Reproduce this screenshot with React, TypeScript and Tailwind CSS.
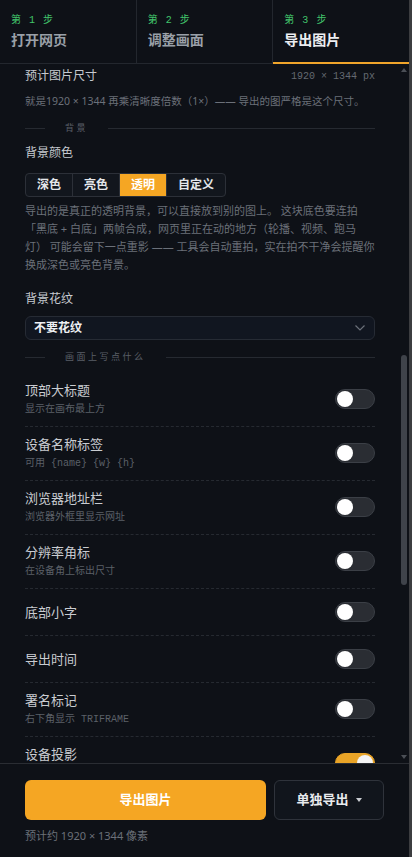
import React from "react";

const sans = "font-['Noto_Sans','Noto_Sans_CJK_SC',sans-serif]";
const mono = "font-['Liberation_Mono','Noto_Sans_CJK_SC',monospace]";

type Row = { title: string; sub?: string; on?: boolean; tall?: boolean };

const rows: Row[] = [
  { title: "顶部大标题", sub: "显示在画布最上方" },
  { title: "设备名称标签", sub: "可用 {name} {w} {h}" },
  { title: "浏览器地址栏", sub: "浏览器外框里显示网址" },
  { title: "分辨率角标", sub: "在设备角上标出尺寸" },
  { title: "底部小字" },
  { title: "导出时间" },
  { title: "署名标记", sub: "右下角显示 TRIFRAME" },
  { title: "设备投影", on: true, tall: true },
];

const steps = [
  { n: 1, label: "打开网页" },
  { n: 2, label: "调整画面" },
  { n: 3, label: "导出图片", active: true },
];

function Toggle({ on }: { on?: boolean }) {
  if (on) {
    return (
      <div className="w-10 h-5 shrink-0 rounded-full bg-[#e9a427] border border-[#e9a427] flex items-center justify-end px-[1px]">
        <div className="w-4 h-4 rounded-full bg-[#f4f4f4]" />
      </div>
    );
  }
  return (
    <div className="w-10 h-5 shrink-0 rounded-full bg-[#2a2d33] border border-[#3b3f46] flex items-center justify-start px-[1px]">
      <div className="w-4 h-4 rounded-full bg-white" />
    </div>
  );
}

function Divider({ label }: { label: string }) {
  return (
    <div className="flex items-center h-[14px] gap-5">
      <div className="w-5 h-px bg-[#262a31]" />
      <span className={`${sans} text-[9px] leading-[14px] tracking-[2.5px] text-[#5a5f67]`}>{label}</span>
      <div className="flex-1 h-px bg-[#262a31]" />
    </div>
  );
}

function Segmented() {
  const opts = ["深色", "亮色", "透明", "自定义"];
  return (
    <div className="flex w-fit h-6 rounded-[4px] border border-[#2c3038] bg-[#12161d] overflow-hidden">
      {opts.map((o, i) => (
        <div
          key={o}
          className={`${sans} px-[11px] flex items-center text-[12px] font-bold leading-none ${
            o === "透明" ? "bg-[#f5a623] text-white" : "text-[#e4e6ea]"
          } ${i > 0 ? "border-l border-[#2c3038]" : ""}`}
        >
          {o}
        </div>
      ))}
    </div>
  );
}

export default function App() {
  return (
    <div className={`${sans} w-[412px] h-[857px] flex bg-[#0e1117] overflow-hidden`}>
      <div className="w-[409px] h-full flex flex-col">
        {/* step tabs */}
        <div className="flex h-16 shrink-0">
          {steps.map((s, i) => (
            <div
              key={s.n}
              className={`flex-1 h-16 pl-[11px] pt-[14px] ${
                s.active ? "border-b-2 border-[#f0a52b]" : "border-b border-[#23272e]"
              } ${i < 2 ? "border-r border-r-[#23272e]" : ""}`}
            >
              <div className={`${mono} text-[10px] leading-[14px] tracking-[1px] text-[#41c46b]`}>
                第 {s.n} 步
              </div>
              <div
                className={`mt-[2px] text-[14px] leading-[20px] font-bold ${
                  s.active ? "text-[#eceef1]" : "text-[#9aa0a8]"
                }`}
              >
                {s.label}
              </div>
            </div>
          ))}
        </div>

        {/* settings body with scrollbar */}
        <div className="flex-1 min-h-0 flex">
          <div className="flex-1 min-w-0 overflow-hidden pl-[25px] pr-[26px] pt-[3px]">
            <div className="flex items-center justify-between h-[18px]">
              <span className="text-[12px] leading-[18px] text-[#c6cad0]">预计图片尺寸</span>
              <span className={`${mono} text-[10px] text-[#646971]`}>1920 × 1344 px</span>
            </div>
            <p className="mt-[8px] text-[10.5px] leading-[16px] text-[#6b7079] whitespace-nowrap">
              就是1920 × 1344 再乘清晰度倍数（1×）—— 导出的图严格是这个尺寸。
            </p>

            <div className="mt-[12px]">
              <Divider label="背景" />
            </div>

            <div className="mt-[9px] text-[12px] leading-[18px] text-[#c6cad0]">背景颜色</div>
            <div className="mt-[11px]">
              <Segmented />
            </div>
            <p className="mt-[5px] text-[11px] leading-[18px] text-[#6b7079]">
              导出的是真正的透明背景，可以直接放到别的图上。 这块底色要连拍「黑底 + 白底」两帧合成，网页里正在动的地方（轮播、视频、跑马灯） 可能会留下一点重影 —— 工具会自动重拍，实在拍不干净会提醒你换成深色或亮色背景。
            </p>

            <div className="mt-[16px] text-[12px] leading-[18px] text-[#c6cad0]">背景花纹</div>
            <div className="mt-[8px] h-6 rounded-[6px] border border-[#262b34] bg-[#111620] flex items-center justify-between pl-[8px] pr-[9px]">
              <span className="text-[12px] font-bold text-[#eef0f3]">不要花纹</span>
              <svg width="10" height="6" viewBox="0 0 10 6" fill="none">
                <path d="M0.5 0.5 L5 5 L9.5 0.5" stroke="#6b7079" strokeWidth="1.2" />
              </svg>
            </div>

            <div className="mt-[10px]">
              <Divider label="画面上写点什么" />
            </div>

            <div className="mt-[9px]">
              {rows.map((r) => (
                <div
                  key={r.title}
                  className={`flex items-center justify-between border-b border-dashed border-[#262a31] ${
                    r.sub || r.tall ? "pt-[8px] pb-[9px]" : "py-[13px]"
                  }`}
                >
                  <div>
                    <div className="text-[13px] leading-[18px] text-[#c9ccd1]">{r.title}</div>
                    {r.sub && (
                      <div className={`${mono} mt-[4px] text-[10px] leading-[14px] text-[#5b6068]`}>{r.sub}</div>
                    )}
                    {r.tall && !r.sub && <div className="h-[18px]" />}
                  </div>
                  <Toggle on={r.on} />
                </div>
              ))}
            </div>
          </div>

          {/* scrollbar */}
          <div className="w-2 shrink-0 flex flex-col items-start">
            <div className="h-3 w-[6px] flex items-center justify-center">
              <svg width="6" height="4" viewBox="0 0 6 4">
                <path d="M3 0 L6 4 L0 4 Z" fill="#4b4f56" />
              </svg>
            </div>
            <div className="flex-1">
              <div className="mt-[279px] w-[6px] h-[230px] rounded-full bg-[#3f434a]" />
            </div>
            <div className="h-3 w-[6px] flex items-center justify-center">
              <svg width="6" height="4" viewBox="0 0 6 4">
                <path d="M0 0 L6 0 L3 4 Z" fill="#4b4f56" />
              </svg>
            </div>
          </div>
        </div>

        {/* footer actions */}
        <div className="h-[94px] shrink-0 border-t border-[#2a2d33] px-[25px] pt-4">
          <div className="flex gap-2 h-10">
            <div className="flex-1 rounded-[6px] bg-[#f5a623] flex items-center justify-center text-[13px] font-bold text-white">
              导出图片
            </div>
            <div className="w-[110px] rounded-[6px] border border-[#2f333b] bg-[#11151c] flex items-center justify-center gap-[7px] text-[13px] font-bold text-[#e8eaed]">
              <span>单独导出</span>
              <svg width="6" height="4" viewBox="0 0 6 4">
                <path d="M0 0 L6 0 L3 4 Z" fill="#c9ccd1" />
              </svg>
            </div>
          </div>
          <div className="mt-2 text-[11px] leading-[16px] text-[#6b7079]">预计约 1920 × 1344 像素</div>
        </div>
      </div>
      <div className="w-[3px] h-full bg-[#3c3d40]" />
    </div>
  );
}
